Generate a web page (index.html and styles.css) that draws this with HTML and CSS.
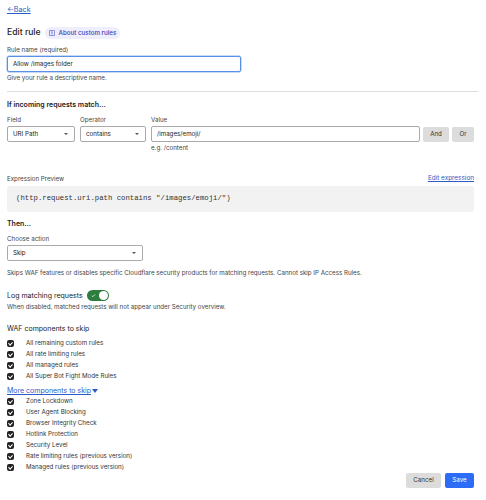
FILE: index.html
```html
<!DOCTYPE html>
<html>
<head>
<meta charset="utf-8">
<link rel="stylesheet" href="styles.css">
</head>
<body>
<div class="page">
  <a class="back" href="#">&larr;Back</a>
  <div class="title-row">
    <h1 class="title">Edit rule</h1>
    <span class="badge"><svg class="badge-icon" viewBox="0 0 8 8" width="6" height="6"><rect x="0.5" y="0.5" width="7" height="7" rx="1" fill="none" stroke="#5b5bd6" stroke-width="1"/><path d="M4 2v4M2.5 2.5h1" stroke="#5b5bd6" stroke-width="1"/></svg>About custom rules</span>
  </div>

  <label class="label">Rule name (required)</label>
  <div class="input name-input">Allow /images folder</div>
  <div class="help">Give your rule a descriptive name.</div>

  <hr class="divider">

  <h2 class="section">If incoming requests match...</h2>
  <div class="match-row">
    <div class="col col-field">
      <div class="label">Field</div>
      <div class="select">URI Path<span class="caret"></span></div>
    </div>
    <div class="col col-op">
      <div class="label">Operator</div>
      <div class="select">contains<span class="caret"></span></div>
    </div>
    <div class="col col-val">
      <div class="label">Value</div>
      <div class="input value-input">/images/emoji/</div>
      <div class="help">e.g. /content</div>
    </div>
    <div class="btns">
      <span class="btn-gray">And</span>
      <span class="btn-gray">Or</span>
    </div>
  </div>

  <div class="expr-head">
    <span class="label">Expression Preview</span>
    <a class="link" href="#">Edit expression</a>
  </div>
  <div class="expr">(http.request.uri.path contains "/images/emoji/")</div>

  <h2 class="section then">Then...</h2>
  <div class="label">Choose action</div>
  <div class="select action-select">Skip<span class="caret"></span></div>
  <div class="help skips">Skips WAF features or disables specific Cloudflare security products for matching requests. Cannot skip IP Access Rules.</div>

  <div class="log-row">
    <span class="log-label">Log matching requests</span>
    <span class="toggle"><svg class="tick" viewBox="0 0 6 6" width="5" height="5"><path d="M1 3.2l1.3 1.2L5 1.6" fill="none" stroke="#fff" stroke-width="0.9"/></svg><span class="knob"></span></span>
  </div>
  <div class="help">When disabled, matched requests will not appear under Security overview.</div>

  <h3 class="sub">WAF components to skip</h3>
  <ul class="checks">
    <li><span class="cb"></span>All remaining custom rules</li>
    <li><span class="cb"></span>All rate limiting rules</li>
    <li><span class="cb"></span>All managed rules</li>
    <li><span class="cb"></span>All Super Bot Fight Mode Rules</li>
  </ul>

  <a class="more" href="#">More components to skip<span class="more-caret"></span></a>
  <ul class="checks more-list">
    <li><span class="cb"></span>Zone Lockdown</li>
    <li><span class="cb"></span>User Agent Blocking</li>
    <li><span class="cb"></span>Browser Integrity Check</li>
    <li><span class="cb"></span>Hotlink Protection</li>
    <li><span class="cb"></span>Security Level</li>
    <li><span class="cb"></span>Rate limiting rules (previous version)</li>
    <li><span class="cb"></span>Managed rules (previous version)</li>
  </ul>

  <div class="actions">
    <span class="btn-cancel">Cancel</span>
    <span class="btn-save">Save</span>
  </div>
</div>
</body>
</html>
```
FILE: styles.css
```css
* { box-sizing: border-box; }
html, body { margin: 0; padding: 0; background: #fff; }
body {
  font-family: Inter, "Noto Sans", sans-serif;
  font-size: 6.2px;
  color: #313131;
  line-height: 1.3;
}
.page { padding: 4px 12px 0 7px; }

.back {
  display: inline-block;
  color: #2c5cc5;
  font-size: 7.2px;
  text-decoration: underline;
  text-underline-offset: 1px;
  line-height: 11px;
}

.title-row { display: flex; align-items: center; gap: 4px; margin-top: 11px; height: 14px; }
.title { margin: 0; font-size: 8.6px; font-weight: 500; color: #1d1d1d; }
.badge {
  display: inline-flex; align-items: center; gap: 4px;
  background: #eeeefc; color: #4242b5;
  border-radius: 6px; padding: 2px 4px 2px 4px; font-size: 6.2px; font-weight: 500;
}

.label { display: block; color: #444; font-size: 6.2px; line-height: 9px; }
.title-row + .label { margin-top: 5px; }
.input {
  border: 1px solid #aaa; border-radius: 2px; height: 16px;
  padding: 0 5px; display: flex; align-items: center; color: #222; font-size: 6.2px;
}
.name-input { width: 234px; border-color: #5a8fe6; margin-top: 2px; box-shadow: 0 0 0 0.5px #8fb3ee; }
.help { color: #444; font-size: 6.2px; line-height: 9px; margin-top: 1px; }

.divider { border: 0; border-top: 1.5px solid #ddd; margin: 9px 0 0 0; width: 471px; }

.section { margin: 8px 0 0 0; font-size: 7px; font-weight: 600; color: #222; line-height: 10px; }

.match-row { display: flex; align-items: flex-start; margin-top: 5px; }
.col-field { width: 68px; margin-right: 5px; }
.col-op { width: 66px; margin-right: 5px; }
.col-val { width: 269px; margin-right: 3px; }
.col .label { margin-bottom: 2px; }
.select {
  position: relative;
  border: 1px solid #aaa; border-radius: 2px; height: 16px;
  padding: 0 5px; display: flex; align-items: center; color: #222;
}
.caret {
  position: absolute; right: 6px; top: 6px;
  border-left: 2px solid transparent; border-right: 2px solid transparent; border-top: 2.5px solid #555;
}
.btns { display: flex; gap: 3px; margin-top: 12px; }
.btn-gray {
  background: #dcdcdc; border-radius: 2px; height: 15px; display: flex; align-items: center;
  justify-content: center; color: #333; font-size: 6.2px;
}
.btns .btn-gray:first-child { width: 26px; }
.btns .btn-gray:last-child { width: 22px; }

.expr-head { display: flex; justify-content: space-between; align-items: center; margin-top: 22px; width: 467px; }
.link { color: #2c5cc5; text-decoration: underline; font-size: 6.4px; }
.expr {
  background: #f2f2f2; border-radius: 3px; width: 467px; height: 26px; margin-top: 3px;
  display: flex; align-items: center; padding-left: 9px;
  font-family: "Liberation Mono", "DejaVu Sans Mono", monospace; font-size: 7.3px; color: #333;
}

.then { margin-top: 7px; }
.then + .label { margin-top: 5px; }
.action-select { width: 136px; margin-top: 2px; }
.skips { margin-top: 7px; }

.log-row { display: flex; align-items: center; gap: 4px; margin-top: 13px; }
.log-label { font-size: 7px; color: #222; }
.toggle {
  position: relative; width: 22px; height: 11px; border-radius: 6px; background: #2f7d3d;
  display: inline-flex; align-items: center; padding-left: 4px;
}
.knob { position: absolute; right: 1px; top: 1px; width: 9px; height: 9px; border-radius: 50%; background: #fff; }

.sub { margin: 13px 0 0 0; font-size: 7px; font-weight: 400; color: #222; line-height: 10px; }

.checks { list-style: none; margin: 4px 0 0 0; padding: 0; }
.checks li { display: flex; align-items: center; height: 11px; color: #333; font-size: 6.2px; }
.cb {
  position: relative; width: 7px; height: 7px; border-radius: 2px; background: #222; margin-right: 12px;
}
.cb::after {
  content: ""; position: absolute; left: 2.3px; top: 1px; width: 1.6px; height: 3.2px;
  border: solid #fff; border-width: 0 1px 1px 0; transform: rotate(45deg);
}

.more {
  display: inline-flex; align-items: center; margin-top: 4px; color: #2c5cc5; font-size: 7px;
  text-decoration: underline; line-height: 10px;
}
.more-caret {
  display: inline-block; margin-left: 1px;
  border-left: 3px solid transparent; border-right: 3px solid transparent; border-top: 4px solid #2c5cc5;
}
.more-list { margin-top: 0; }

.actions { display: flex; justify-content: flex-end; gap: 4px; width: 467px; margin-top: 0; }
.btn-cancel {
  background: #dcdcdc; color: #333; width: 35px; height: 15px; border-radius: 2px;
  display: flex; align-items: center; justify-content: center; font-size: 6.2px;
}
.btn-save {
  background: #2c6cf6; color: #fff; width: 29px; height: 15px; border-radius: 2px;
  display: flex; align-items: center; justify-content: center; font-size: 6.2px;
}
```
